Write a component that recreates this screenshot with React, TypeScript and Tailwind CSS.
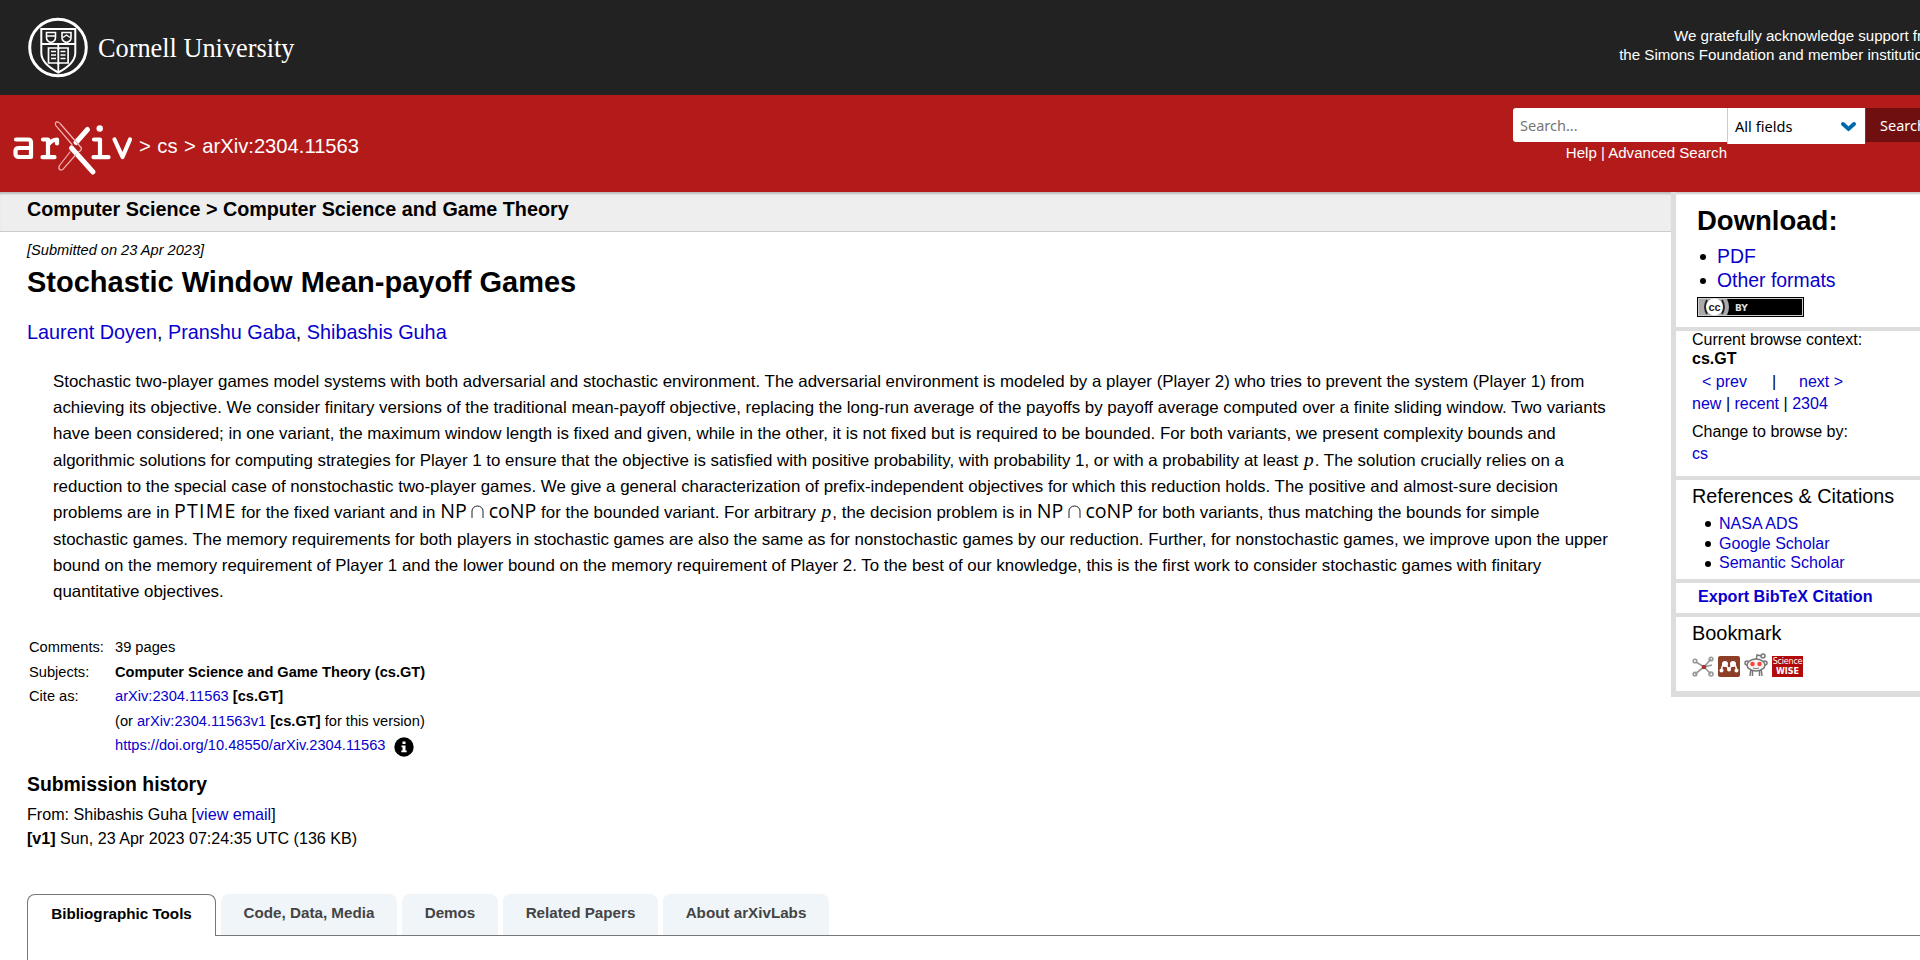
import React from "react";

const A = ({ children, className = "" }: { children: React.ReactNode; className?: string }) => (
  <a className={"text-[#0800cc] " + className}>{children}</a>
);

const P = () => <i className="mx-px font-['Liberation_Serif',serif] text-[19.5px] leading-none">p</i>;
const M = ({ children, className = "" }: { children: React.ReactNode; className?: string }) => (
  <span className={"font-['Open_Sans',sans-serif] text-[19.6px] leading-none text-black " + className}>{children}</span>
);

const NPcoNP = () => (
  <span className="inline-flex h-[18px] items-baseline gap-[4.5px]">
    <M>NP</M>
    <svg width="13" height="13" viewBox="0 0 13 13"><path d="M1 14V6a5.500 5 0 0 1 11 0v8" fill="none" stroke="#222" strokeWidth="1" /></svg>
    <M>coNP</M>
  </span>
);

const lines: React.ReactNode[] = [
  "Stochastic two-player games model systems with both adversarial and stochastic environment. The adversarial environment is modeled by a player (Player 2) who tries to prevent the system (Player 1) from",
  "achieving its objective. We consider finitary versions of the traditional mean-payoff objective, replacing the long-run average of the payoffs by payoff average computed over a finite sliding window. Two variants",
  "have been considered; in one variant, the maximum window length is fixed and given, while in the other, it is not fixed but is required to be bounded. For both variants, we present complexity bounds and",
  <>algorithmic solutions for computing strategies for Player 1 to ensure that the objective is satisfied with positive probability, with probability 1, or with a probability at least <P />. The solution crucially relies on a</>,
  "reduction to the special case of nonstochastic two-player games. We give a general characterization of prefix-independent objectives for which this reduction holds. The positive and almost-sure decision",
  <>problems are in <M className="tracking-[1.2px]">PTIME</M> for the fixed variant and in <NPcoNP /> for the bounded variant. For arbitrary <P />, the decision problem is in <NPcoNP /> for both variants, thus matching the bounds for simple</>,
  "stochastic games. The memory requirements for both players in stochastic games are also the same as for nonstochastic games by our reduction. Further, for nonstochastic games, we improve upon the upper",
  "bound on the memory requirement of Player 1 and the lower bound on the memory requirement of Player 2. To the best of our knowledge, this is the first work to consider stochastic games with finitary",
  "quantitative objectives.",
];

const CornellSeal = () => (
  <svg width="60" height="62" viewBox="0 0 60 62" fill="none" stroke="#fff">
    <circle cx="30" cy="30.500" r="28.300" strokeWidth="3" />
    <path d="M13.300 12h34v24c0 9-8.500 15-17 19.500c-8.500-4.500-17-10.500-17-19.500z" strokeWidth="2" />
    <path d="M14 27h33M30.300 27v28" strokeWidth="1.800" />
    <path d="M18.500 15.500h9v5c0 3-2.500 4.500-4.500 5c-2-.5-4.500-2-4.500-5zM34 15.500h9v5c0 3-2.500 4.500-4.500 5c-2-.5-4.500-2-4.500-5z" strokeWidth="1.600" />
    <path d="M19 19h8M35 20.500l3.500-2.500l3.500 2.500" strokeWidth="1.400" />
    <path d="M20.500 31h8.800l1 1l1-1h8.800v15h-8.800l-1 1l-1-1h-8.800z" strokeWidth="1.700" />
    <path d="M23 34.500h5M23 38h5M23 41.500h5M32.500 34.500h5M32.500 38h5M32.500 41.500h5" strokeWidth="1.600" />
  </svg>
);

const ArxivLogo = () => (
  <svg width="122" height="56" viewBox="0 0 122 56" fill="none" stroke="#fff" strokeWidth="4.200" strokeLinecap="round" strokeLinejoin="round">
    <path d="M4 18.500h12q3 0 3 3v14.500H7q-3.500 0-3.500-3v-3q0-3 3.500-3h12" />
    <path d="M31 18.500h5v17.500M30.500 36.200h12M36 24q4-5.500 9-5.500v4" />
    <path d="M82 18.500h6v17.500M81.500 36.200h15" />
    <path d="M102.500 18.500l8 17.500l7.500-17.500" />
    <circle cx="87.700" cy="7.500" r="3.200" fill="#fff" stroke="none" />
    <path d="M75.500 8.500L64 21.500" strokeWidth="5" />
    <path d="M59.500 27L81 51" strokeWidth="5" />
    <path d="M46.500 1.200q-2.200-1-3 .8q-.4 1.500 .6 2.800L60 23.500M48.500 3L69.500 27M48.500 3q-1-1.500-2-1.800M58 31L47.500 44.500q-1.500 3 .5 4.300q2 .5 3.300-1L64 33.500M69.500 27q0 3-3 4" stroke="#f0b5b5" strokeWidth="1.200" />
  </svg>
);

const Bookmarks = () => (
  <div className="flex h-[22px] items-start gap-[4px]">
    <svg width="22" height="22" viewBox="0 0 22 22" fill="none" stroke="#999" strokeWidth="1.600">
      <path d="M4 6L12 11L19 3M12 11L3 18M12 11L19 18M12 11L20 9" />
      <circle cx="3" cy="5" r="1.800" /><circle cx="19" cy="3" r="1.800" /><circle cx="3" cy="18" r="1.800" /><circle cx="19" cy="18" r="2" />
      <circle cx="12" cy="11" r="1.500" fill="#a33" stroke="#a33" />
    </svg>
    <svg width="22" height="21" viewBox="0 0 22 21">
      <rect width="22" height="21" rx="2" fill="#8c3f26" />
      <path d="M3.500 15q0-6 3.500-7l4 5l4-5q3.500 1 3.500 7" fill="none" stroke="#fff" strokeWidth="1.500" />
      <circle cx="7" cy="8" r="3" fill="#fff" /><circle cx="15" cy="8" r="3" fill="#fff" />
      <circle cx="11" cy="13.500" r="2" fill="#fff" /><circle cx="3.500" cy="14.500" r="2" fill="#fff" /><circle cx="18.500" cy="14.500" r="2" fill="#fff" />
    </svg>
    <svg width="24" height="24" viewBox="0 0 24 24" className="-mt-[3px]" fill="#f4f4f4" stroke="#777" strokeWidth="1.500">
      <path d="M12 8l1-6l4.500 1" fill="none" /><circle cx="19" cy="3" r="2" />
      <circle cx="3" cy="10" r="2" /><circle cx="21" cy="10" r="2" />
      <path d="M7 15l-1 8M17 15l1 8M8.500 16v7M15.500 16v7" fill="none" /><ellipse cx="12" cy="12" rx="9" ry="6" />
      <circle cx="8.500" cy="11" r="1.500" fill="#f43" stroke="#f43" /><circle cx="15.500" cy="11" r="1.500" fill="#f43" stroke="#f43" />
      <path d="M9 15q3 1.500 6 0" fill="none" strokeWidth="1" />
    </svg>
    <div className="flex h-[21px] w-[31px] flex-col items-center bg-[#b00a0a] font-['DejaVu_Sans',sans-serif] text-[8px] leading-[9.5px] text-white">
      <span className="pt-px tracking-[-0.2px]">Science</span>
      <span className="font-bold">WISE</span>
    </div>
  </div>
);

const Bullet = ({ children, className }: { children: React.ReactNode; className: string }) => (
  <li className={"flex items-center " + className}>
    <span className="mt-px size-[6px] shrink-0 rounded-full bg-black" />
    <A>{children}</A>
  </li>
);

const tabs = [
  { label: "Code, Data, Media", cls: "w-[176px] mr-[5px]" },
  { label: "Demos", cls: "w-[96px] mr-[5px]" },
  { label: "Related Papers", cls: "w-[155px] mr-[5px]" },
  { label: "About arXivLabs", cls: "w-[166px]" },
];

export default function App() {
  return (
    <div className="h-[960px] w-[1920px] overflow-hidden bg-white font-['Liberation_Sans',Arial,sans-serif] text-black">
      <div className="flex w-[1960px] flex-col">
        <header className="flex h-[95px] bg-[#222] text-white">
          <div className="flex w-[1500px] pl-[28px] pt-[17px]">
            <CornellSeal />
            <span className="ml-[10px] mt-[14px] whitespace-nowrap font-['Liberation_Serif',serif] text-[26.3px] leading-[36px]">Cornell University</span>
          </div>
          <div className="w-[460px] whitespace-nowrap pr-[17px] pt-[27px] text-right text-[15.1px] leading-[18.6px]">
            We gratefully acknowledge support from<br />the Simons Foundation and member institutions.
          </div>
        </header>
        <div className="flex h-[97px] bg-[#b31b1b] text-white">
          <div className="flex w-[1513px] pl-[12px] pt-[26px]">
            <ArxivLogo />
            <span className="ml-[5px] mt-[12px] whitespace-nowrap text-[20.2px] leading-[26px] [word-spacing:0.9px]">&gt; cs &gt; arXiv:2304.11563</span>
          </div>
          <div className="w-[214px] pt-[13px]">
            <div className="flex h-[34px] items-center rounded-l-[3px] bg-white pl-[7px] pt-px font-['Noto_Sans',sans-serif] text-[14.5px] text-[#757575]">Search...</div>
            <div className="whitespace-nowrap pt-px text-right text-[15.05px] leading-[20px]">Help | Advanced Search</div>
          </div>
          <div className="mt-[13px] flex h-[36px] w-[138px] items-center justify-between border-l border-[#ccc] bg-white pl-[7px] pr-[9px] pt-px font-['Noto_Sans',sans-serif] text-[14.6px] text-black">
            All fields
            <svg width="15" height="10" viewBox="0 0 15 10"><path d="M2 2l5.500 5l5.500-5" fill="none" stroke="#0068ac" strokeWidth="3.800" strokeLinecap="round" /></svg>
          </div>
          <div className="ml-px mt-[13px] flex h-[34px] flex-1 items-center bg-[#700f10] pl-[14px] pt-[2px] font-['Noto_Sans',sans-serif] text-[14.5px]">Search</div>
        </div>

        <div className="flex h-[702px]">
          <main className="w-[1671px] shrink-0 whitespace-nowrap">
            <h1 className="h-[40px] border-b border-[#ccc] bg-[#eee] pl-[27px] pt-[4px] text-[19.76px] font-bold leading-[26px] shadow-[inset_0_3px_2px_-1px_#bbb]">
              Computer Science &gt; Computer Science and Game Theory
            </h1>
            <div className="pl-[27px]">
              <div className="pt-[8px] text-[14.6px] italic leading-[20px]">[Submitted on 23 Apr 2023]</div>
              <h2 className="pt-[4px] text-[29px] font-bold leading-[36px]">Stochastic Window Mean-payoff Games</h2>
              <div className="pt-[19px] text-[19.82px] leading-[26px]">
                <A>Laurent Doyen</A>, <A>Pranshu Gaba</A>, <A>Shibashis Guha</A>
              </div>
              <div className="pl-[26px] pt-[23.5px] text-[16.89px]">
                {lines.map((l, i) => (
                  <div key={i} className="h-[26.35px] leading-[26.35px]">{l}</div>
                ))}
              </div>
              <div className="grid grid-cols-[86px_1fr] pl-[2px] pt-[29.5px] text-[14.65px] leading-[24.5px]">
                <span>Comments:</span><span>39 pages</span>
                <span>Subjects:</span><b className="text-[14.62px]">Computer Science and Game Theory (cs.GT)</b>
                <span>Cite as:</span><span><A>arXiv:2304.11563</A> <b>[cs.GT]</b></span>
                <span /><span>(or <A>arXiv:2304.11563v1</A> <b>[cs.GT]</b> for this version)</span>
                <span />
                <span className="flex">
                  <A>https://doi.org/10.48550/arXiv.2304.11563</A>
                  <svg width="20" height="20" viewBox="0 0 20 20" className="ml-[8px] mt-[4px]">
                    <circle cx="10" cy="10" r="9.700" />
                    <path d="M8.500 4.500h3v2.500h-3zM7.500 8.500h4v5h1.200v1.800H7.300v-1.800h1.200v-3.200h-1z" fill="#fff" />
                  </svg>
                </span>
              </div>
              <h2 className="pt-[13px] text-[19.4px] font-bold leading-[26px]">Submission history</h2>
              <div className="pt-[5px] text-[16.1px] leading-[24.5px]">
                From: Shibashis Guha [<A>view email</A>]<br />
                <b>[v1]</b> Sun, 23 Apr 2023 07:24:35 UTC (136 KB)
              </div>
            </div>
          </main>
          <aside className="h-[505px] flex-1 whitespace-nowrap border-b-[6px] border-l-[5px] border-[#ddd] bg-white text-[16.05px] shadow-[inset_0_3px_2px_-1px_#ccc]">
            <section className="h-[139px] border-b-4 border-[#ddd] pl-[21px] pt-[13px]">
              <h3 className="text-[27.5px] font-bold leading-[32px]">Download:</h3>
              <ul className="pl-[3px] pt-[8px] text-[19.4px] leading-[23.5px]">
                <Bullet className="gap-[11px]">PDF</Bullet>
                <Bullet className="gap-[11px]">Other formats</Bullet>
              </ul>
              <svg className="mt-[5px]" width="107" height="20" viewBox="0 0 107 20">
                <rect x=".5" y=".5" width="106" height="19" fill="#000" stroke="#000" />
                <rect x="1.500" y="1.500" width="104" height="17" fill="#000" stroke="#ccc" />
                <path d="M2 2h28q4 8 0 16H2z" fill="#aaa" />
                <circle cx="17.500" cy="10" r="8.500" fill="#fff" />
                <path d="M10 3q-4 7 0 14M25 3q4 7 0 14" fill="none" stroke="#222" strokeWidth="1.800" />
                <text x="17.500" y="13.500" textAnchor="middle" fontSize="11" fontWeight="bold" fontFamily="Liberation Sans" fill="#222">cc</text>
                <text x="38" y="13.500" fontSize="9" fontWeight="bold" fontFamily="DejaVu Sans" fill="#ddd">BY</text>
              </svg>
            </section>
            <section className="flex h-[149px] flex-col border-b-4 border-[#ddd] pl-[16px]">
              <div className="-mt-px leading-[18.5px]">Current browse context:<br /><b>cs.GT</b></div>
              <div className="flex pl-[10px] pt-[3px] leading-[23px]">
                <A className="w-[70px]">&lt; prev</A><span className="w-[27px]">|</span><A>next &gt;</A>
              </div>
              <div className="leading-[21.5px]"><A>new</A> | <A>recent</A> | <A>2304</A></div>
              <div className="pt-[5.5px] leading-[22px]">Change to browse by:<br /><A>cs</A></div>
            </section>
            <section className="h-[103px] border-b-4 border-[#ddd] pl-[16px] pt-[4px]">
              <h3 className="text-[19.78px] leading-[24px]">References &amp; Citations</h3>
              <ul className="pl-[13px] pt-[6px] leading-[19.700px]">
                <Bullet className="gap-[8px]">NASA ADS</Bullet>
                <Bullet className="gap-[8px]">Google Scholar</Bullet>
                <Bullet className="gap-[8px]">Semantic Scholar</Bullet>
              </ul>
            </section>
            <section className="h-[34px] border-b-4 border-[#ddd] pl-[22px] pt-[3px] text-[16.15px] font-bold leading-[20px]"><A>Export BibTeX Citation</A></section>
            <section className="pl-[16px] pt-[4px]">
              <h3 className="pb-[11px] text-[19.9px] leading-[24px]">Bookmark</h3>
              <Bookmarks />
            </section>
          </aside>
        </div>

        <div className="ml-[27px] flex h-[42px] shrink-0 text-[15.2px] font-bold">
          <div className="w-[189px] rounded-t-[8px] border-x border-t border-[#777] text-center leading-[38px]">Bibliographic Tools</div>
          <div className="flex flex-1 border-b border-[#777] pl-[5px] text-[#444]">
            {tabs.map((t) => (
              <div key={t.label} className={"h-[41px] rounded-t-[8px] bg-[#eff5f9] text-center leading-[38px] " + t.cls}>{t.label}</div>
            ))}
          </div>
        </div>
        <div className="ml-[27px] h-[24px] border-l border-[#777]" />
      </div>
    </div>
  );
}
